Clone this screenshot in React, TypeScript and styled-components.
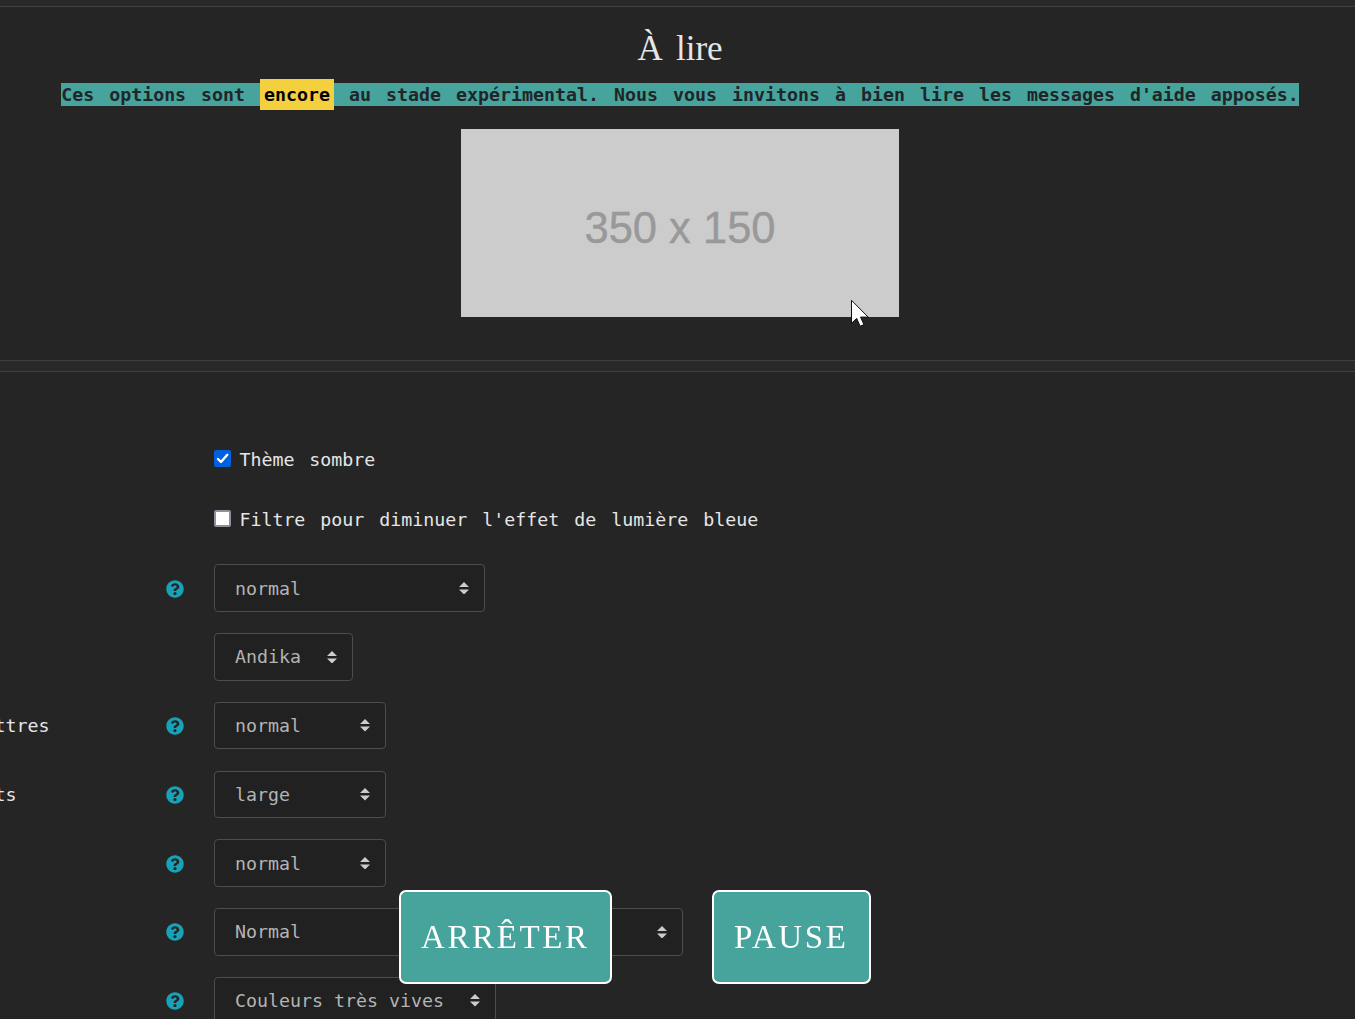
import React from "react";
import styled, { createGlobalStyle } from "styled-components";
import { FaQuestionCircle } from "react-icons/fa";

const GlobalStyle = createGlobalStyle`
  *, *::before, *::after { box-sizing: border-box; }
  body {
    margin: 0;
    background: #252525;
    overflow: hidden;
  }
`;

const mono = `"DejaVu Sans Mono", monospace`;
const serif = `"Liberation Serif", serif`;

const Page = styled.div`
  width: 100%;
  height: 1019px;
  overflow: hidden;
  background: #252525;
  color: #e6e6e6;
  font: 18.27px/27px ${mono};
`;

const Divider = styled.div<{ $height: number; $first?: boolean }>`
  height: ${(p) => p.$height}px;
  background: #292929;
  border-bottom: 1px solid #404040;
  border-top: ${(p) => (p.$first ? "0" : "1px solid #404040")};
`;

const Notice = styled.section`
  height: 353px;
  padding: 21px 0 0 5px;
  display: flex;
  flex-direction: column;
  align-items: center;
`;

const Title = styled.h2`
  margin: 0;
  height: 55px;
  font: 400 35px/42px ${serif};
  word-spacing: 4.5px;
`;

const Sentence = styled.p`
  margin: 0;
  height: 23px;
  line-height: 23px;
  font-weight: 700;
  word-spacing: 4px;
  white-space: pre;
  color: #212529;
  background: #46a49c;
`;

const SpokenWord = styled.mark`
  display: inline-block;
  margin: -4px 0;
  padding: 4px;
  line-height: 23px;
  vertical-align: top;
  color: #000;
  background: #f4d03f;
`;

const Placeholder = styled.div`
  width: 438px;
  height: 188px;
  margin-top: 23px;
  padding-top: 10px;
  display: flex;
  align-items: center;
  justify-content: center;
  background: #ccc;
  color: #999;
  font: 43.5px/50px "Liberation Sans", sans-serif;
  -webkit-text-stroke: 0.4px #999;
`;

const Form = styled.form`
  padding-top: 74px;
`;

const CheckRow = styled.label`
  display: flex;
  align-items: center;
  gap: 8.4px;
  height: 27px;
  margin-bottom: 33px;
  padding-left: 214px;
  word-spacing: 4px;
  white-space: pre;
`;

const Box = styled.span<{ $checked?: boolean }>`
  width: 17px;
  height: 17px;
  margin-bottom: 2px;
  display: flex;
  border-radius: 2px;
  background: ${(p) => (p.$checked ? "#0060df" : "#fff")};
  border: ${(p) => (p.$checked ? "0" : "2px solid #8f8f9d")};
`;

const Fields = styled.div`
  display: flex;
  flex-direction: column;
  gap: 21.2px;
  margin-top: -1.8px;
`;

const Field = styled.div`
  display: grid;
  grid-template-columns: 165.5px 48.5px max-content;
  align-items: center;
  height: 47.6px;
`;

const Label = styled.span`
  margin-left: -5.5px;
  white-space: pre;
`;

const Help = styled.span`
  display: flex;
  padding-top: 1px;
  color: #17a2b8;
`;

const Select = styled.div<{ $width: number }>`
  width: ${(p) => p.$width}px;
  height: 47.6px;
  display: flex;
  align-items: center;
  justify-content: space-between;
  padding: 0 15px 0 20px;
  border: 1px solid #4d4d4d;
  border-radius: 4px;
  background: #212121;
  color: #b4b4b4;
  white-space: pre;
`;

const Player = styled.div`
  position: fixed;
  left: 399px;
  top: 890px;
  display: flex;
  gap: 100px;
`;

const PlayerButton = styled.button<{ $width: number }>`
  width: ${(p) => p.$width}px;
  height: 94px;
  padding: 0 0 0 20px;
  text-align: left;
  border: 2px solid #fff;
  border-radius: 7px;
  background: #46a49c;
  color: #fff;
  font: 33px/50px ${serif};
  letter-spacing: 2.6px;
`;

const Cursor = styled.svg`
  position: fixed;
  left: 851px;
  top: 299px;
`;

const Arrows = () => (
  <svg width="10" height="12.5" viewBox="0 0 4 5" fill="#cccccc">
    <path d="M2 0L0 2h4zm0 5L0 3h4z" />
  </svg>
);

const fields = [
  { label: "", help: true, value: "normal", width: 271 },
  { label: "", help: false, value: "Andika", width: 139 },
  { label: "ttres", help: true, value: "normal", width: 172 },
  { label: "ts", help: true, value: "large", width: 172 },
  { label: "", help: true, value: "normal", width: 172 },
  { label: "", help: true, value: "Normal", width: 469 },
  { label: "", help: true, value: "Couleurs très vives", width: 282 },
];

export default function App() {
  return (
    <Page>
      <GlobalStyle />
      <Divider $height={7} $first />
      <Notice>
        <Title>À lire</Title>
        <Sentence>
          {"Ces options sont "}
          <SpokenWord>encore</SpokenWord>
          {" au stade expérimental. Nous vous invitons à bien lire les messages d'aide apposés."}
        </Sentence>
        <Placeholder>350 x 150</Placeholder>
      </Notice>
      <Divider $height={12} />
      <Form>
        <CheckRow>
          <Box $checked>
            <svg width="17" height="17" viewBox="0 0 17 17" fill="none">
              <path d="M4 9l3 3 6.3-7.2" stroke="#fff" strokeWidth="2.4" strokeLinecap="round" strokeLinejoin="round" />
            </svg>
          </Box>
          Thème sombre
        </CheckRow>
        <CheckRow>
          <Box />
          Filtre pour diminuer l'effet de lumière bleue
        </CheckRow>
        <Fields>
          {fields.map((f, i) => (
            <Field key={i}>
              <Label>{f.label}</Label>
              <Help>{f.help && <FaQuestionCircle size={18} />}</Help>
              <Select $width={f.width}>
                {f.value}
                <Arrows />
              </Select>
            </Field>
          ))}
        </Fields>
      </Form>
      <Player>
        <PlayerButton type="button" $width={213}>ARRÊTER</PlayerButton>
        <PlayerButton type="button" $width={159}>PAUSE</PlayerButton>
      </Player>
      <Cursor width="19" height="29" viewBox="0 0 19 29">
        <path d="M.5 1.3V24.3l5.2-4.9 3.4 7.8 3.8-1.6-3.4-7.5h7.7z" fill="#fff" stroke="#10101c" strokeWidth="1" />
      </Cursor>
    </Page>
  );
}
